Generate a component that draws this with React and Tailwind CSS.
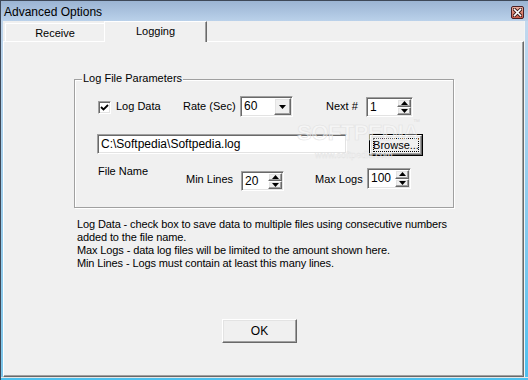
import React from "react";

const sunken =
  "border border-t-[#a0a0a0] border-l-[#a0a0a0] border-r-white border-b-white shadow-[inset_1px_1px_0_#696969,inset_-1px_-1px_0_#e3e3e3]";
const raised =
  "border border-t-white border-l-white border-r-[#696969] border-b-[#696969] shadow-[inset_-1px_-1px_0_#a0a0a0,inset_1px_1px_0_#e3e3e3]";

function Up() {
  return (
    <svg width="7" height="4" viewBox="0 0 7 4">
      <path d="M3.5 0L7 4H0z" fill="#000" />
    </svg>
  );
}
function Down() {
  return (
    <svg width="7" height="4" viewBox="0 0 7 4">
      <path d="M0 0H7L3.5 4z" fill="#000" />
    </svg>
  );
}

function Spin({ value, w, h, mt }) {
  return (
    <div className={`${sunken} ${w} ${h} ${mt} bg-white flex p-[1px]`}>
      <div className="flex-1 pl-[2px] leading-[16px] text-[12px]">{value}</div>
      <div className="w-[14px] flex flex-col">
        <div className={`${raised} flex-1 bg-[#f0f0f0] flex items-center justify-center`}>
          <Up />
        </div>
        <div className={`${raised} flex-1 bg-[#f0f0f0] flex items-center justify-center`}>
          <Down />
        </div>
      </div>
    </div>
  );
}

export default function App() {
  return (
    <div className="w-[528px] h-[380px] overflow-hidden flex flex-col border-t border-l border-[#3e4858] bg-[#f0f0f0] font-['Liberation_Sans',Arial,sans-serif] text-[11px] text-black">
      {/* Title bar */}
      <div className="h-[20px] shrink-0 flex items-center bg-gradient-to-b from-[#9bb4d3] to-[#bad1ea]">
        <div className="ml-[3px] text-[12px] leading-[14px] mt-[1px]">Advanced Options</div>
        <div className="ml-auto mr-[4px] mt-[2px] w-[13px] h-[13px] rounded-[2px] border border-[#4a1e22] bg-gradient-to-b from-[#eab0a2] to-[#c95a48] flex items-center justify-center">
          <svg width="9" height="9" viewBox="0 0 9 9">
            <path d="M1.5 1.5L7.5 7.5M7.5 1.5L1.5 7.5" stroke="#3a1a1a" strokeWidth="3.4" strokeLinecap="square" />
            <path d="M1.5 1.5L7.5 7.5M7.5 1.5L1.5 7.5" stroke="#fff" strokeWidth="1.6" strokeLinecap="square" />
          </svg>
        </div>
      </div>

      {/* Body */}
      <div className="flex-1 flex flex-col">
        <div className="flex-1 flex">
          <div className="w-[2px] bg-gradient-to-b from-[#bcd3ea] to-[#7cc6ea]" />
          <div className="flex-1 flex flex-col">
            {/* Tabs */}
            <div className="h-[20px] shrink-0 flex items-end">
              <div className="ml-[2px] w-[99px] h-[18px] border-t border-l border-white flex items-center justify-center leading-[13px] pt-[1px]">
                Receive
              </div>
              <div className="relative z-10 mb-[-1px] w-[103px] h-[21px] border-t border-l border-white border-r border-r-[#696969] shadow-[inset_-1px_0_0_#a0a0a0] bg-[#f0f0f0] flex justify-center leading-[13px] pt-[3px]">
                Logging
              </div>
            </div>

            {/* Panel */}
            <div className="flex-1 flex flex-col border-t border-l border-white border-r border-b border-r-[#696969] border-b-[#696969] shadow-[inset_-1px_-1px_0_#a0a0a0]">
              {/* Group box */}
              <div className="relative mt-[37px] ml-[70px] w-[380px] h-[129px] shrink-0 border border-[#a0a0a0] shadow-[inset_1px_1px_0_#fff,1px_1px_0_#fff] flex flex-col">
                <div className="-mt-[8px] ml-[7px] w-fit bg-[#f0f0f0] px-[1px] leading-[13px]">
                  Log File Parameters
                </div>

                {/* Row 1 */}
                <div className="mt-[11px] h-[21px] flex items-start">
                  <div className={`ml-[23px] mt-[5px] w-[13px] h-[13px] bg-white ${sunken} flex items-center justify-center`}>
                    <svg width="9" height="9" viewBox="0 0 9 9">
                      <path d="M1 4L3.5 6.5L8 2" stroke="#000" strokeWidth="1.8" fill="none" />
                    </svg>
                  </div>
                  <div className="ml-[5px] w-[67px] leading-[21px]">Log Data</div>
                  <div className="w-[57px] leading-[21px]">Rate (Sec)</div>
                  <div className={`${sunken} w-[53px] h-[21px] bg-white flex p-[1px]`}>
                    <div className="flex-1 pl-[2px] leading-[17px] text-[12px]">60</div>
                    <div className={`${raised} w-[17px] bg-[#f0f0f0] flex items-center justify-center`}>
                      <Down />
                    </div>
                  </div>
                  <div className="ml-[33px] w-[40px] leading-[21px]">Next #</div>
                  <Spin value="1" w="w-[47px]" h="h-[20px]" mt="mt-[1px]" />
                </div>

                {/* Row 2 */}
                <div className="mt-[17px] flex items-start">
                  <div className={`${sunken} ml-[22px] w-[250px] h-[20px] bg-white pl-[3px] leading-[18px] text-[12px]`}>
                    C:\Softpedia\Softpedia.log
                  </div>
                  <div className="ml-[22px] w-[54px] h-[22px] border border-black">
                    <div className={`${raised} w-full h-full p-[2px]`}>
                      <div className="w-full h-full border border-dotted border-black flex items-center justify-center leading-[12px]">
                        Browse...
                      </div>
                    </div>
                  </div>
                </div>

                {/* Row 3 */}
                <div className="mt-[9px] flex items-start">
                  <div className="ml-[23px] w-[88px] leading-[13px]">File Name</div>
                  <div className="mt-[8px] w-[55px] leading-[13px]">Min Lines</div>
                  <Spin value="20" w="w-[43px]" h="h-[20px]" mt="mt-[6px]" />
                  <div className="ml-[31px] mt-[8px] w-[52px] leading-[13px]">Max Logs</div>
                  <Spin value="100" w="w-[44px]" h="h-[21px]" mt="mt-[3px]" />
                </div>

                {/* Watermark */}
                <div className="pointer-events-none absolute left-[222px] top-[42px] text-[22px] leading-[22px] font-bold tracking-[-0.5px] text-white/40 [-webkit-text-stroke:0.6px_#e2e2e2]">
                  SOFTPEDIA
                </div>
                <div className="pointer-events-none absolute left-[338px] top-[38px] text-[7px] leading-[7px] text-[#dedede]">™</div>
                <div className="pointer-events-none absolute left-[240px] top-[70px] text-[9px] leading-[10px] text-white/50 [-webkit-text-stroke:0.3px_#e0e0e0]">
                  www.softpedia.com
                </div>
              </div>

              {/* Description */}
              <div className="mt-[10px] ml-[73px] leading-[13px] tracking-[-0.12px]">
                Log Data - check box to save data to multiple files using consecutive numbers
                <br />
                added to the file name.
                <br />
                Max Logs - data log files will be limited to the amount shown here.
                <br />
                Min Lines - Logs must contain at least this many lines.
              </div>

              {/* OK */}
              <div className={`${raised} mt-[49px] ml-[218px] w-[75px] h-[24px] flex items-center justify-center text-[12px] leading-[14px]`}>
                OK
              </div>
            </div>
          </div>
          <div className="w-[4px] border-l border-[#f4f4f4] bg-gradient-to-b from-[#c2d8ee] to-[#4cc0ee]" />
        </div>
        <div className="h-[3px] shrink-0 border-t border-[#e6e6e6] bg-[#4cc0ee]" />
      </div>
    </div>
  );
}
